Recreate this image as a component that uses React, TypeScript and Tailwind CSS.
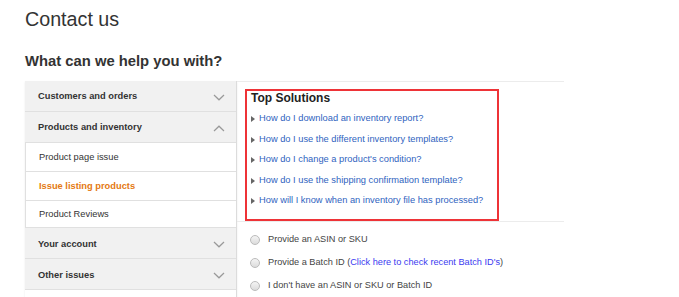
import React from "react";

const font = { fontFamily: '"Liberation Sans", Arial, sans-serif' };

function Chevron({ up }: { up?: boolean }) {
    return (
        <svg width="12" height="7" viewBox="0 0 12 7" className="text-[#999]">
            <path
                d={up ? "M1 6 L6 1.2 L11 6" : "M1 1 L6 5.8 L11 1"}
                fill="none"
                stroke="currentColor"
                strokeWidth="1.2"
            />
        </svg>
    );
}

const solutions = [
    "How do I download an inventory report?",
    "How do I use the different inventory templates?",
    "How do I change a product's condition?",
    "How do I use the shipping confirmation template?",
    "How will I know when an inventory file has processed?",
];

export default function App() {
    return (
        <div className="w-[679px] h-[297px] bg-white text-[#333] overflow-hidden" style={font}>
            <h1 className="pl-[25px] pt-[6px] text-[19.7px] leading-[26px] font-normal">Contact us</h1>
            <h2 className="pl-[25px] mt-[20px] text-[14.8px] leading-[18px] font-bold">What can we help you with?</h2>

            <div className="flex mt-[11px] pl-[25px]">
                {/* menu on the left */}
                <div className="w-[212px] border-r border-[#dcdcdc] shadow-[0_1px_2px_rgba(0,0,0,0.08)]">
                    <div className="h-[31px] bg-[#f1f1f1] border-b border-[#e0e0e0] flex items-center justify-between pl-[13px] pr-[11px] pt-[2px] text-[9.3px] font-bold">
                        <span>Customers and orders</span>
                        <Chevron />
                    </div>
                    <div className="h-[31px] bg-[#f1f1f1] border-b border-[#e0e0e0] flex items-center justify-between pl-[13px] pr-[11px] pt-[2px] text-[9.3px] font-bold">
                        <span>Products and inventory</span>
                        <Chevron up />
                    </div>
                    <div className="h-[29px] border-b border-l border-[#e0e0e0] flex items-center pl-[13px] pt-[1px] text-[9.3px]">
                        Product page issue
                    </div>
                    <div className="h-[28px] flex items-center pl-[13px] pt-[1px] text-[9.3px] font-bold text-[#e47911] border-l border-[#e0e0e0]">
                        Issue listing products
                    </div>
                    <div className="h-[28px] border-y border-l border-[#e0e0e0] flex items-center pl-[13px] pt-[1px] text-[9.3px]">
                        Product Reviews
                    </div>
                    <div className="h-[31px] bg-[#f1f1f1] border-b border-[#e0e0e0] flex items-center justify-between pl-[13px] pr-[11px] pt-[3px] text-[9.3px] font-bold">
                        <span>Your account</span>
                        <Chevron />
                    </div>
                    <div className="h-[31px] bg-[#f1f1f1] border-b border-[#e0e0e0] flex items-center justify-between pl-[13px] pr-[11px] pt-[3px] text-[9.3px] font-bold">
                        <span>Other issues</span>
                        <Chevron />
                    </div>
                </div>

                {/* right side */}
                <div className="flex-1">
                    <div className="w-[327px] h-[141px] border-y border-[#ececec] pl-[8px] pt-[7px]">
                        <div className="w-[254px] h-[132px] border-2 border-[#ee3337] pl-[4px]">
                            <div className="text-[12px] font-bold leading-[15px] text-[#222]">Top Solutions</div>
                            <ul className="mt-[3px]">
                                {solutions.map((s) => (
                                    <li key={s} className="flex items-center h-[20.5px] text-[9.3px] text-[#2f63c0]">
                                        <span className="w-0 h-0 border-y-[3px] border-y-transparent border-l-[4px] border-l-[#666] mr-[4px]" />
                                        {s}
                                    </li>
                                ))}
                            </ul>
                        </div>
                    </div>

                    <div className="pl-[13px] pt-[6px] text-[9.2px] text-[#444]">
                        {[
                            <span key="a">Provide an ASIN or SKU</span>,
                            <span key="b">
                                Provide a Batch ID (<span className="text-[#3b3bf0]">Click here to check recent Batch ID's</span>)
                            </span>,
                            <span key="c">I don't have an ASIN or SKU or Batch ID</span>,
                        ].map((label, i) => (
                            <div key={i} className="flex items-center h-[23px]">
                                <span className="w-[10px] h-[10px] rounded-full border border-[#bbb] bg-gradient-to-b from-[#f4f4f4] to-[#dcdcdc] mr-[8px]" />
                                {label}
                            </div>
                        ))}
                    </div>
                </div>
            </div>
        </div>
    );
}
